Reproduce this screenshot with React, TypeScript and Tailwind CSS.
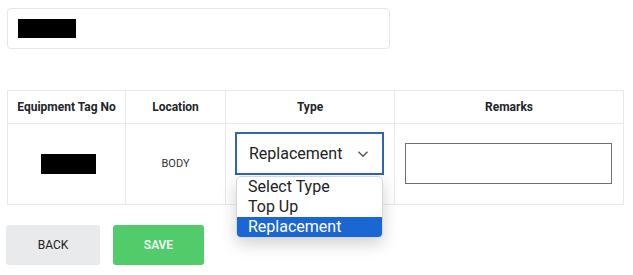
import React from "react";

export default function App() {
  const [type, setType] = React.useState("Replacement");
  const options = ["Select Type", "Top Up", "Replacement"];

  return (
    <div className="min-h-[275px] bg-white pl-[7px] pt-[8px] font-['Roboto',sans-serif] text-[#212529]">
      <div className="flex h-[41px] w-[383px] items-center rounded-[4px] border border-[#e4e6e8] px-[10px]">
        <div className="h-[19px] w-[58px] bg-black" />
      </div>

      <table className="mt-[41px] w-[616px] table-fixed border-collapse text-center">
        <colgroup>
          <col className="w-[118px]" />
          <col className="w-[100px]" />
          <col className="w-[169px]" />
          <col className="w-[229px]" />
        </colgroup>
        <thead>
          <tr className="h-[33px] text-[12px] font-bold">
            <th className="border border-[#e8e9eb]">Equipment Tag No</th>
            <th className="border border-[#e8e9eb]">Location</th>
            <th className="border border-[#e8e9eb]">Type</th>
            <th className="border border-[#e8e9eb]">Remarks</th>
          </tr>
        </thead>
        <tbody>
          <tr className="h-[81px]">
            <td className="border border-[#e8e9eb] pl-[4px]">
              <div className="mx-auto h-[20px] w-[55px] bg-black" />
            </td>
            <td className="border border-[#e8e9eb] text-[11px] text-[#333]">BODY</td>
            <td className="border border-[#e8e9eb] pl-[9px] pr-[9px] pt-[8px] align-top">
              <div className="relative">
                <div className="flex h-[43px] w-[149px] items-center justify-between border-2 border-[#2f64b9] pl-[12px] pr-[13px] text-[16px] text-[#222]">
                  <span>{type}</span>
                  <svg width="12" height="8" viewBox="0 0 12 8" fill="none">
                    <path d="M1.5 1.8 6 6.2 10.5 1.8" stroke="#555" strokeWidth="1.4" />
                  </svg>
                </div>
                <div className="absolute left-[1px] top-[44px] z-10 w-[147px] overflow-hidden rounded-[5px] border border-[#d6d6d6] bg-white text-left text-[16px] leading-[20px] text-[#222] shadow-[0_6px_16px_rgba(0,0,0,0.18)]">
                  {options.map((o) => (
                    <div
                      key={o}
                      onClick={() => setType(o)}
                      className={o === type ? "h-[20px] bg-[#1a66d2] pl-[11px] text-white" : "h-[20px] pl-[11px]"}
                    >
                      {o}
                    </div>
                  ))}
                </div>
              </div>
            </td>
            <td className="border border-[#e8e9eb] pl-[10px] pr-[11px] pb-[2px]">
              <input className="h-[41px] w-[207px] border border-[#6c7075] bg-white outline-none" />
            </td>
          </tr>
        </tbody>
      </table>

      <div className="-ml-[1px] mt-[20px] flex gap-[13px] text-[12px]">
        <button className="h-[40px] w-[94px] rounded-[3px] bg-[#e8eaec] text-[#222]">BACK</button>
        <button className="h-[40px] w-[91px] rounded-[3px] bg-[#52cc6b] font-medium text-white">SAVE</button>
      </div>
    </div>
  );
}
